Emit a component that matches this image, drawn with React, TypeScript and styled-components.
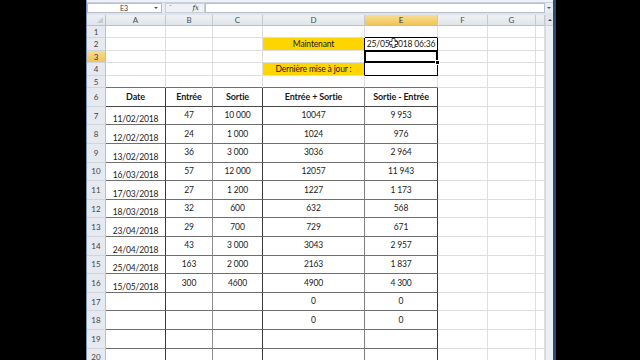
import React from "react";
import styled, { createGlobalStyle, css } from "styled-components";

const Global = createGlobalStyle`
  html, body { margin: 0; padding: 0; background: #000; }
  body { font-family: Lato, "Open Sans", sans-serif; overflow: hidden; }
`;

const Screen = styled.div`
  width: 640px;
  height: 360px;
  background: #000;
  display: flex;
  overflow: hidden;
`;

const Letterbox = styled.div<{ $w: number }>`
  width: ${(p) => p.$w}px;
  flex: none;
  background: #000;
`;

const Window = styled.div`
  width: 470px;
  flex: none;
  display: flex;
  flex-direction: column;
  background: #dde4ec;
  border-left: 1px solid #7d97b8;
  border-right: 3px solid #2e4b70;
  box-sizing: border-box;
  overflow: hidden;
`;

const RibbonEdge = styled.div`
  height: 3px;
  background: #eef1f5;
  border-bottom: 1px solid #c9d2dc;
  box-sizing: border-box;
`;

const FormulaBar = styled.div`
  height: 10px;
  display: flex;
  align-items: stretch;
  background: #e8edf3;
  margin-bottom: 2px;
`;

const NameBox = styled.div`
  width: 75px;
  flex: none;
  display: flex;
  align-items: center;
  background: #fff;
  border: 1px solid #b6bec8;
  box-sizing: border-box;
  font-size: 7px;
  color: #333;
`;

const NameText = styled.span`
  flex: 1;
  text-align: center;
  padding-left: 6px;
`;

const DropArrow = styled.span`
  width: 0;
  height: 0;
  margin-right: 3px;
  border-left: 2px solid transparent;
  border-right: 2px solid transparent;
  border-top: 2px solid #555;
`;

const FxArea = styled.div`
  width: 40px;
  flex: none;
  margin-left: 3px;
  display: flex;
  align-items: center;
  justify-content: space-between;
  padding: 0 5px 0 3px;
  box-sizing: border-box;
  background: #eef1f5;
  border: 1px solid #c7cfd8;
  font-size: 7px;
  color: #8a8f96;
`;

const FxLabel = styled.span`
  font-family: "DejaVu Serif", serif;
  font-style: italic;
  font-size: 7px;
  color: #333;
`;

const FormulaInput = styled.div`
  flex: 1;
  background: #fff;
  border: 1px solid #b6bec8;
  box-sizing: border-box;
`;

const ExpandBtn = styled.div`
  width: 8px;
  flex: none;
  display: flex;
  align-items: center;
  justify-content: center;
  background: #e9edf2;
  &::after {
    content: "";
    border-left: 2px solid transparent;
    border-right: 2px solid transparent;
    border-top: 2px solid #555;
  }
`;

const SheetArea = styled.div`
  flex: 1;
  display: flex;
  overflow: hidden;
`;

const Sheet = styled.div`
  width: 458px;
  flex: none;
  display: grid;
  grid-template-columns: 19px 60px 47px 50px 102px 73px 50px 48px 9px;
  grid-template-rows: 11px 12.46px 12.46px 12.46px 12.46px 12.46px repeat(15, 18.6px);
  background: #fff;
  overflow: hidden;
`;

const Scrollbar = styled.div`
  width: 8px;
  flex: none;
  display: flex;
  flex-direction: column;
  background: #eceff3;
  border-left: 1px solid #d3d9e0;
  box-sizing: border-box;
`;

const ScrollUp = styled.div`
  height: 10px;
  display: flex;
  align-items: center;
  justify-content: center;
  background: #e2e7ee;
  border-bottom: 1px solid #c8d0da;
  &::after {
    content: "";
    border-left: 2px solid transparent;
    border-right: 2px solid transparent;
    border-bottom: 2px solid #444;
  }
`;

const Corner = styled.div`
  background: linear-gradient(#eceff3, #dfe4ea);
  border-right: 1px solid #b9c1cb;
  border-bottom: 1px solid #b9c1cb;
  box-sizing: border-box;
  position: relative;
  &::after {
    content: "";
    position: absolute;
    right: 2px;
    bottom: 2px;
    border-left: 6px solid transparent;
    border-bottom: 6px solid #c4cad2;
  }
`;

const activeHead = css`
  background: linear-gradient(#f9dc92, #f1c35a);
  color: #333;
`;

const ColHead = styled.div<{ $active?: boolean }>`
  display: flex;
  align-items: center;
  justify-content: center;
  background: linear-gradient(#eef1f4, #e0e5ea);
  border-right: 1px solid #c3c9d1;
  border-bottom: 1px solid #b9c1cb;
  box-sizing: border-box;
  font-size: 8px;
  color: #4a4f55;
  ${(p) => p.$active && activeHead}
`;

const RowHead = styled.div<{ $active?: boolean }>`
  display: flex;
  align-items: center;
  justify-content: center;
  background: #e6eaf0;
  border-right: 1px solid #b9c1cb;
  border-bottom: 1px solid #cfd5dc;
  box-sizing: border-box;
  font-size: 8px;
  color: #3e4349;
  ${(p) => p.$active && activeHead}
`;

type CellProps = {
  $rb: string;
  $bb: string;
  $bg?: string;
  $bold?: boolean;
  $valign?: "center" | "flex-end";
  $selected?: boolean;
};

const Cell = styled.div<CellProps>`
  display: flex;
  align-items: ${(p) => p.$valign || "center"};
  justify-content: center;
  box-sizing: border-box;
  border-right: 1px solid ${(p) => p.$rb};
  border-bottom: 1px solid ${(p) => p.$bb};
  background: ${(p) => p.$bg || "#fff"};
  font-size: ${(p) => (p.$bold ? "9px" : "8.5px")};
  font-weight: ${(p) => (p.$bold ? 700 : 400)};
  letter-spacing: -0.15px;
  color: #1b1b1b;
  white-space: nowrap;
  padding-bottom: ${(p) => (p.$valign === "flex-end" ? "0px" : "1px")};
  position: relative;
  ${(p) =>
    p.$selected &&
    css`
      z-index: 2;
      &::after {
        content: "";
        position: absolute;
        left: -1px;
        top: -1px;
        right: -1px;
        bottom: -1px;
        border: 2px solid #000;
      }
      &::before {
        content: "";
        position: absolute;
        right: -3px;
        bottom: -3px;
        width: 3px;
        height: 3px;
        background: #000;
        border: 1px solid #fff;
        z-index: 3;
      }
    `}
`;

const CursorMark = styled.svg`
  position: absolute;
  left: 24px;
  top: 0px;
  z-index: 4;
`;

const GRID = "#dedede";
const TBL = "#6f6f6f";
const TBL_DARK = "#474747";
const BLACK = "#000";
const YELLOW = "#ffd500";

const colLetters = ["A", "B", "C", "D", "E", "F", "G", ""];
const tableRight = ["#3a3a3a", "#8d8d8d", "#3a3a3a", "#7e7e7e", "#3a3a3a"];

const data: string[][] = [
  ["11/02/2018", "47", "10 000", "10047", "9 953"],
  ["12/02/2018", "24", "1 000", "1024", "976"],
  ["13/02/2018", "36", "3 000", "3036", "2 964"],
  ["16/03/2018", "57", "12 000", "12057", "11 943"],
  ["17/03/2018", "27", "1 200", "1227", "1 173"],
  ["18/03/2018", "32", "600", "632", "568"],
  ["23/04/2018", "29", "700", "729", "671"],
  ["24/04/2018", "43", "3 000", "3043", "2 957"],
  ["25/04/2018", "163", "2 000", "2163", "1 837"],
  ["15/05/2018", "300", "4600", "4900", "4 300"],
  ["", "", "", "0", "0"],
  ["", "", "", "0", "0"],
  ["", "", "", "", ""],
  ["", "", "", "", ""],
];

function cellText(row: number, col: number): string {
  if (row === 2 && col === 3) return "Maintenant";
  if (row === 2 && col === 4) return "25/05/2018 06:36";
  if (row === 4 && col === 3) return "Dernière mise à jour :";
  if (row === 6) return ["Date", "Entrée", "Sortie", "Entrée + Sortie", "Sortie - Entrée"][col] || "";
  if (row >= 7 && col < 5) return data[row - 7]?.[col] ?? "";
  return "";
}

function cellProps(row: number, col: number): CellProps {
  const inTable = row >= 6 && col < 5;
  let rb = GRID;
  let bb = GRID;
  let bg: string | undefined;
  if (inTable) {
    rb = tableRight[col];
    bb = row === 6 ? TBL_DARK : TBL;
  }
  if (row === 5 && col < 5) bb = TBL;
  if (col === 3 && (row === 2 || row === 4)) bg = YELLOW;
  if (col === 3 && row >= 2 && row <= 4) rb = BLACK;
  if (col === 4 && row === 1) bb = BLACK;
  if (col === 4 && row >= 2 && row <= 4) {
    rb = BLACK;
    bb = BLACK;
  }
  return {
    $rb: rb,
    $bb: bb,
    $bg: bg,
    $bold: row === 6 && col < 5,
    $valign: inTable && col === 0 && row >= 7 ? "flex-end" : "center",
    $selected: row === 3 && col === 4,
  };
}

const rows = Array.from({ length: 20 }, (_, i) => i + 1);

export default function App() {
  return (
    <>
      <Global />
      <Screen>
        <Letterbox $w={86} />
        <Window>
          <RibbonEdge />
          <FormulaBar>
            <NameBox>
              <NameText>E3</NameText>
              <DropArrow />
            </NameBox>
            <FxArea>
              <span>ˇ</span>
              <FxLabel>fx</FxLabel>
            </FxArea>
            <FormulaInput />
            <ExpandBtn />
          </FormulaBar>
          <SheetArea>
            <Sheet>
              <Corner />
              {colLetters.map((c, i) => (
                <ColHead key={"h" + i} $active={c === "E"}>
                  {c}
                </ColHead>
              ))}
              {rows.map((r) => (
                <React.Fragment key={r}>
                  <RowHead $active={r === 3}>{r}</RowHead>
                  {colLetters.map((_, c) => (
                    <Cell key={c} {...cellProps(r, c)}>
                      {cellText(r, c)}
                      {r === 2 && c === 4 && (
                        <CursorMark width="9" height="10" viewBox="0 0 9 10">
                          <path
                            d="M3 0.5h3v3h2.5v3H6v3H3v-3H0.5v-3H3z"
                            fill="#fff"
                            stroke="#222"
                            strokeWidth="0.8"
                          />
                        </CursorMark>
                      )}
                    </Cell>
                  ))}
                </React.Fragment>
              ))}
            </Sheet>
            <Scrollbar>
              <ScrollUp />
            </Scrollbar>
          </SheetArea>
        </Window>
        <Letterbox $w={84} />
      </Screen>
    </>
  );
}
